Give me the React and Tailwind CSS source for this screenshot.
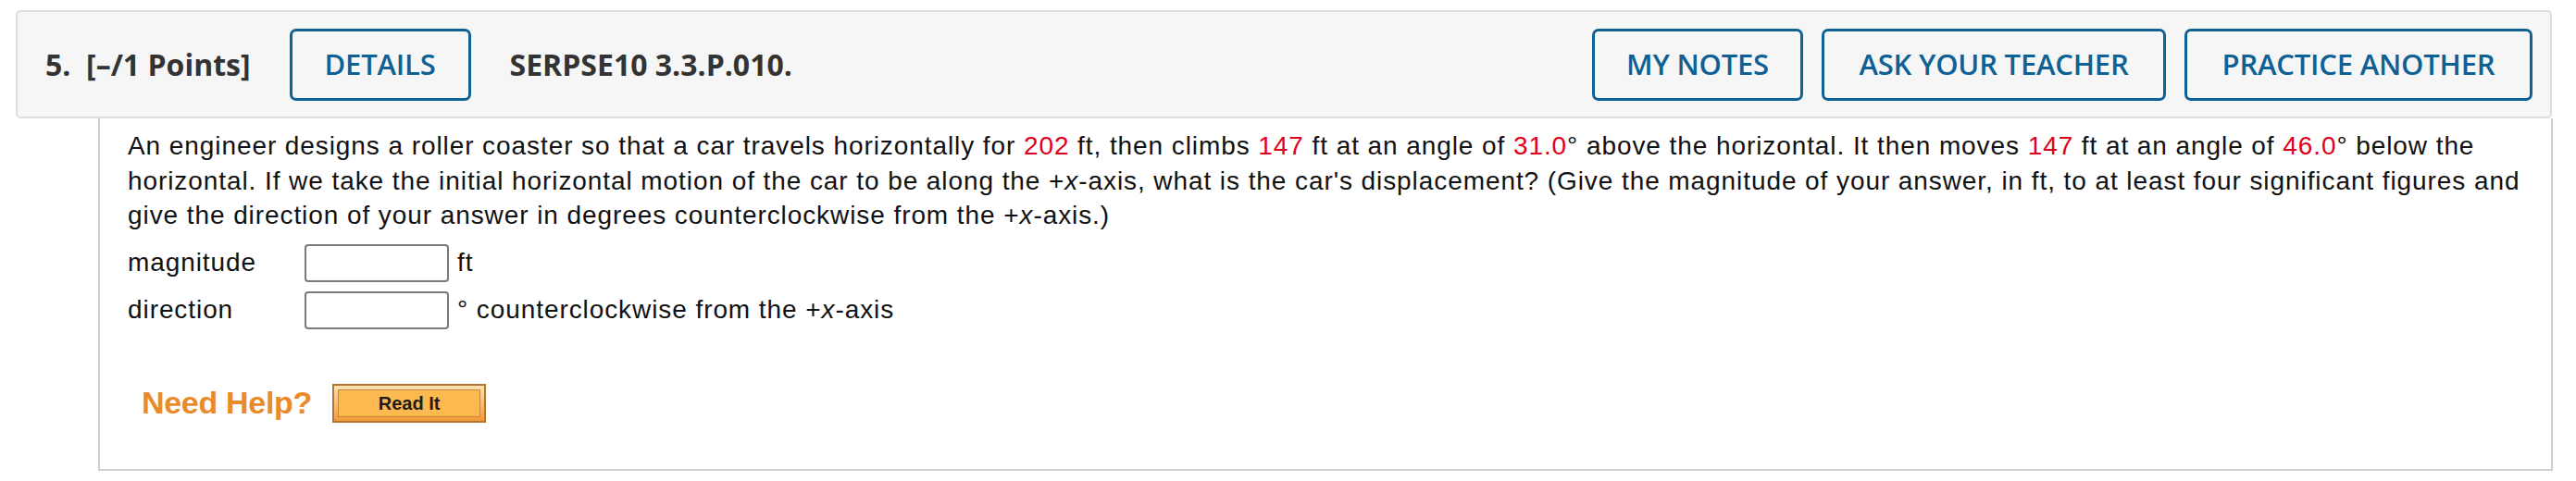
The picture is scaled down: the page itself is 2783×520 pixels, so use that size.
import React from "react";

const headerFont = { fontFamily: "'Open Sans', 'Liberation Sans', sans-serif" };

function BlueButton({ label, width }) {
  return (
    <button
      className={`h-[78px] ${width} flex items-center justify-center border-[3px] border-[#0e6194] rounded-[7px] bg-[#f6f6f6] text-[#0e6194] text-[31px] font-semibold tracking-[-0.2px]`}
    >
      {label}
    </button>
  );
}

function Red({ children }) {
  return <span className="text-[#e0001b]">{children}</span>;
}

function AnswerRow({ label, unit }) {
  return (
    <div className="flex items-center h-[41px]">
      <span className="w-[191px]">{label}</span>
      <input
        type="text"
        className="w-[156px] h-[41px] border-2 border-[#7a7a7a] rounded-[4px] bg-white outline-none"
      />
      <span className="ml-[9px]">{unit}</span>
    </div>
  );
}

export default function App() {
  return (
    <div className="w-[2783px] h-[520px] bg-white pt-[11px]">
      {/* --- question header bar --- */}
      <div
        className="ml-[17px] mr-[26px] h-[117px] flex items-center bg-[#f6f6f6] border-2 border-[#dedede] rounded-[5px] pl-[30px] pr-[19px] text-[#333333]"
        style={headerFont}
      >
        <span className="text-[32px] font-bold whitespace-pre">5.  [–/1 Points]</span>
        <div className="ml-[42px]">
          <BlueButton label="DETAILS" width="w-[196px]" />
        </div>
        <span className="ml-[42px] text-[32px] font-bold">SERPSE10 3.3.P.010.</span>
        <div className="ml-auto flex gap-[20px]">
          <BlueButton label="MY NOTES" width="w-[228px]" />
          <BlueButton label="ASK YOUR TEACHER" width="w-[372px]" />
          <BlueButton label="PRACTICE ANOTHER" width="w-[376px]" />
        </div>
      </div>

      {/* --- question body --- */}
      <div
        className="ml-[106px] mr-[25px] h-[381px] border-2 border-t-0 border-[#cfcfcf] pl-[30px] pr-[10px] pt-[11px] text-[28px] tracking-[0.92px] leading-[37.5px] text-[#111111]"
        style={{ fontFamily: "'Liberation Sans', Arial, sans-serif" }}
      >
        <p>
          An engineer designs a roller coaster so that a car travels horizontally for <Red>202</Red> ft, then
          climbs <Red>147</Red> ft at an angle of <Red>31.0</Red>° above the horizontal. It then
          moves <Red>147</Red> ft at an angle of <Red>46.0</Red>° below the horizontal. If we take the initial
          horizontal motion of the car to be along the +<i>x</i>-axis, what is the car's displacement? (Give
          the magnitude of your answer, in ft, to at least four significant figures and give the direction of
          your answer in degrees counterclockwise from the +<i>x</i>-axis.)
        </p>

        <div className="mt-[12px] flex flex-col gap-[10px]">
          <AnswerRow label="magnitude" unit="ft" />
          <AnswerRow label="direction" unit={<>° counterclockwise from the +<i>x</i>-axis</>} />
        </div>

        <div className="mt-[59px] ml-[15px] flex items-center gap-[22px] tracking-normal">
          <span className="text-[34px] font-bold text-[#e98a2b] tracking-[-0.3px]">Need Help?</span>
          <div className="w-[166px] h-[42px] border-2 border-[#b6742e] bg-gradient-to-b from-[#fde2b4] to-[#f39a33] p-[4px]">
            <div className="h-full border border-[#c98536] bg-[#fbb94f] flex items-center justify-center text-[20px] font-bold text-[#1c1c1c] leading-none">
              Read It
            </div>
          </div>
        </div>
      </div>
    </div>
  );
}
